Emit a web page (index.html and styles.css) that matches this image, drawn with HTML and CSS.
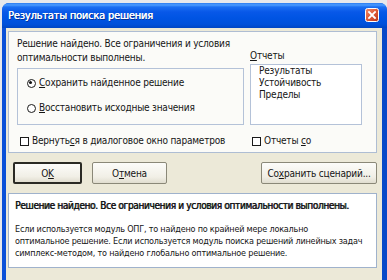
FILE: index.html
```html
<!DOCTYPE html>
<html lang="ru">
<head>
<meta charset="utf-8">
<title>Результаты поиска решения</title>
<link rel="stylesheet" href="styles.css">
</head>
<body>
<div class="desk">
  <div class="window">
    <div class="titlebar">
      <span class="title">Результаты поиска решения</span>
      <span class="close">
        <svg width="14" height="14" viewBox="0 0 14 14">
          <defs>
            <linearGradient id="cg" x1="0" y1="0" x2="1" y2="1">
              <stop offset="0" stop-color="#F0896A"/>
              <stop offset="0.5" stop-color="#DE5A36"/>
              <stop offset="1" stop-color="#B8341A"/>
            </linearGradient>
          </defs>
          <rect x="0.5" y="0.5" width="13" height="13" rx="2" fill="url(#cg)" stroke="#FFFFFF" stroke-width="1"/>
          <path d="M4 4 L10 10 M10 4 L4 10" stroke="#FFFFFF" stroke-width="1.8" stroke-linecap="square"/>
        </svg>
      </span>
    </div>
    <div class="frame">
      <div class="client">
        <div class="panel">
          <div class="cols">
            <div class="leftcol">
              <p class="msg">Решение найдено. Все ограничения и условия<br>оптимальности выполнены.</p>
              <div class="group">
                <div class="opt"><span class="rb on"></span><span><u>С</u>охранить найденное решение</span></div>
                <div class="opt"><span class="rb"></span><span><u>В</u>осстановить исходные значения</span></div>
              </div>
            </div>
            <div class="rightcol">
              <div class="lbl"><u>О</u>тчеты</div>
              <div class="list">
                <div class="item">Результаты</div>
                <div class="item">Устойчивость</div>
                <div class="item">Пределы</div>
              </div>
            </div>
          </div>
          <div class="checks">
            <div class="check first"><span class="cb"></span><span>Вернуть<u>с</u>я в диалоговое окно параметров</span></div>
            <div class="check"><span class="cb"></span><span>Отчеты <u>с</u>о</span></div>
          </div>
        </div>
        <div class="buttons">
          <button class="btn ok">O<u>K</u></button>
          <button class="btn cancel">О<u>т</u>мена</button>
          <button class="btn save">Со<u>х</u>ранить сценарий...</button>
        </div>
        <div class="info">
          <p class="bold">Решение найдено. Все ограничения и условия оптимальности выполнены.</p>
          <p class="desc">Если используется модуль ОПГ, то найдено по крайней мере локально<br>оптимальное решение. Если используется модуль поиска решений линейных задач<br>симплекс-методом, то найдено глобально оптимальное решение.</p>
        </div>
      </div>
    </div>
  </div>
</div>
</body>
</html>
```
FILE: styles.css
```css
* { box-sizing: border-box; }
html, body { margin: 0; padding: 0; }
body {
  width: 387px;
  height: 280px;
  overflow: hidden;
  background: #E6E8EC;
  font-family: "DejaVu Sans Condensed", "Liberation Sans", sans-serif;
  font-size: 10px;
  letter-spacing: -0.2px;
  color: #151515;
}
p { margin: 0; }
u { text-decoration: underline; text-underline-offset: 1px; }

.desk {
  padding: 3px 0 0 2px;
  height: 280px;
}
.window {
  width: 385px;
  height: 277px;
  background: #0055E5;
  border-radius: 7px 7px 0 0;
  display: flex;
  flex-direction: column;
  overflow: hidden;
}
.titlebar {
  height: 25px;
  flex: none;
  display: flex;
  align-items: center;
  justify-content: space-between;
  padding: 0 8px 0 6px;
  background: linear-gradient(#2A7BF0 0, #4A9BFF 2px, #1A6EF2 4px, #0858E8 9px, #0054E3 60%, #0050DA 85%, #0046C4 100%);
}
.title {
  color: #FFFFFF;
  font-family: "DejaVu Sans Condensed", "Liberation Sans", sans-serif;
  font-size: 11px;
  letter-spacing: -0.2px;
  text-shadow: 0.3px 0 0 #FFFFFF, 1px 1px 0 #0A2E8C;
}
.close { display: flex; margin-top: -1px; }

.frame {
  flex: 1;
  min-height: 0;
  padding: 0 5px 0 4px;
  background: linear-gradient(90deg, #0A50D8, #0058EA 50%, #0848C8);
  display: flex;
}
.client {
  flex: 1;
  min-width: 0;
  overflow: hidden;
  background: #ECE9D8;
  display: flex;
  flex-direction: column;
}

.panel {
  margin: 3px 5px 0 2px;
  border: 1px solid #AEBDD3;
  background: #FBFBF8;
  padding: 5px 14px 4px 8px;
}
.cols {
  display: flex;
  align-items: flex-end;
  gap: 6px;
}
.leftcol { width: 227px; flex: none; }
.msg { line-height: 14px; white-space: nowrap; margin-bottom: 3px; }
.group {
  height: 57px;
  border: 1px solid #B4C2D8;
  padding: 7px 0 0 9px;
  display: flex;
  flex-direction: column;
  gap: 11px;
}
.opt {
  display: flex;
  align-items: center;
  line-height: 14px;
  gap: 3px;
}
.rb {
  width: 9px;
  height: 9px;
  border-radius: 50%;
  border: 1.6px solid #1A1A1A;
  background: #FFFFFF;
  position: relative;
  flex: none;
}
.rb.on::after {
  content: "";
  position: absolute;
  left: 1.4px;
  top: 1.4px;
  width: 3px;
  height: 3px;
  border-radius: 50%;
  background: #111;
}
.rightcol { width: 112px; flex: none; }
.lbl { line-height: 14px; margin-bottom: 1px; }
.list {
  height: 61px;
  border: 1px solid #B4C2D8;
  background: #FFFFFF;
  padding: 0 0 0 8px;
}
.item { line-height: 12px; }

.checks {
  display: grid;
  grid-template-columns: 235px auto;
  margin-top: 9px;
  line-height: 14px;
}
.check {
  display: flex;
  align-items: center;
  gap: 3px;
  white-space: nowrap;
}
.check.first { padding-left: 3px; }
.cb {
  width: 9px;
  height: 9px;
  border: 1.6px solid #1A1A1A;
  background: #FFFFFF;
  flex: none;
}

.buttons {
  display: flex;
  margin-top: 9px;
  padding: 0 5px 0 7px;
  gap: 10px;
}
.btn {
  height: 22px;
  font: inherit;
  letter-spacing: inherit;
  color: #151515;
  border: 1px solid #8A8878;
  border-radius: 2px;
  background: linear-gradient(#FCFCF9, #F1EFE6 70%, #E0DDCF);
  padding: 0;
  flex: none;
}
.ok { width: 69px; border: 2px solid #2A2A24; }
.cancel { width: 75px; }
.save { width: 116px; margin-left: auto; }

.info {
  margin: 9px 5px 0 2px;
  height: 75px;
  border: 1px solid #9FB2CC;
  background: #FFFFFF;
  padding: 5px 6px 0 6px;
  overflow: hidden;
}
.bold {
  line-height: 14px;
  white-space: nowrap;
  letter-spacing: -0.35px;
  text-shadow: 0.6px 0 0 #151515;
}
.desc { margin-top: 10px; line-height: 12px; white-space: nowrap; font-size: 9px; }
```
